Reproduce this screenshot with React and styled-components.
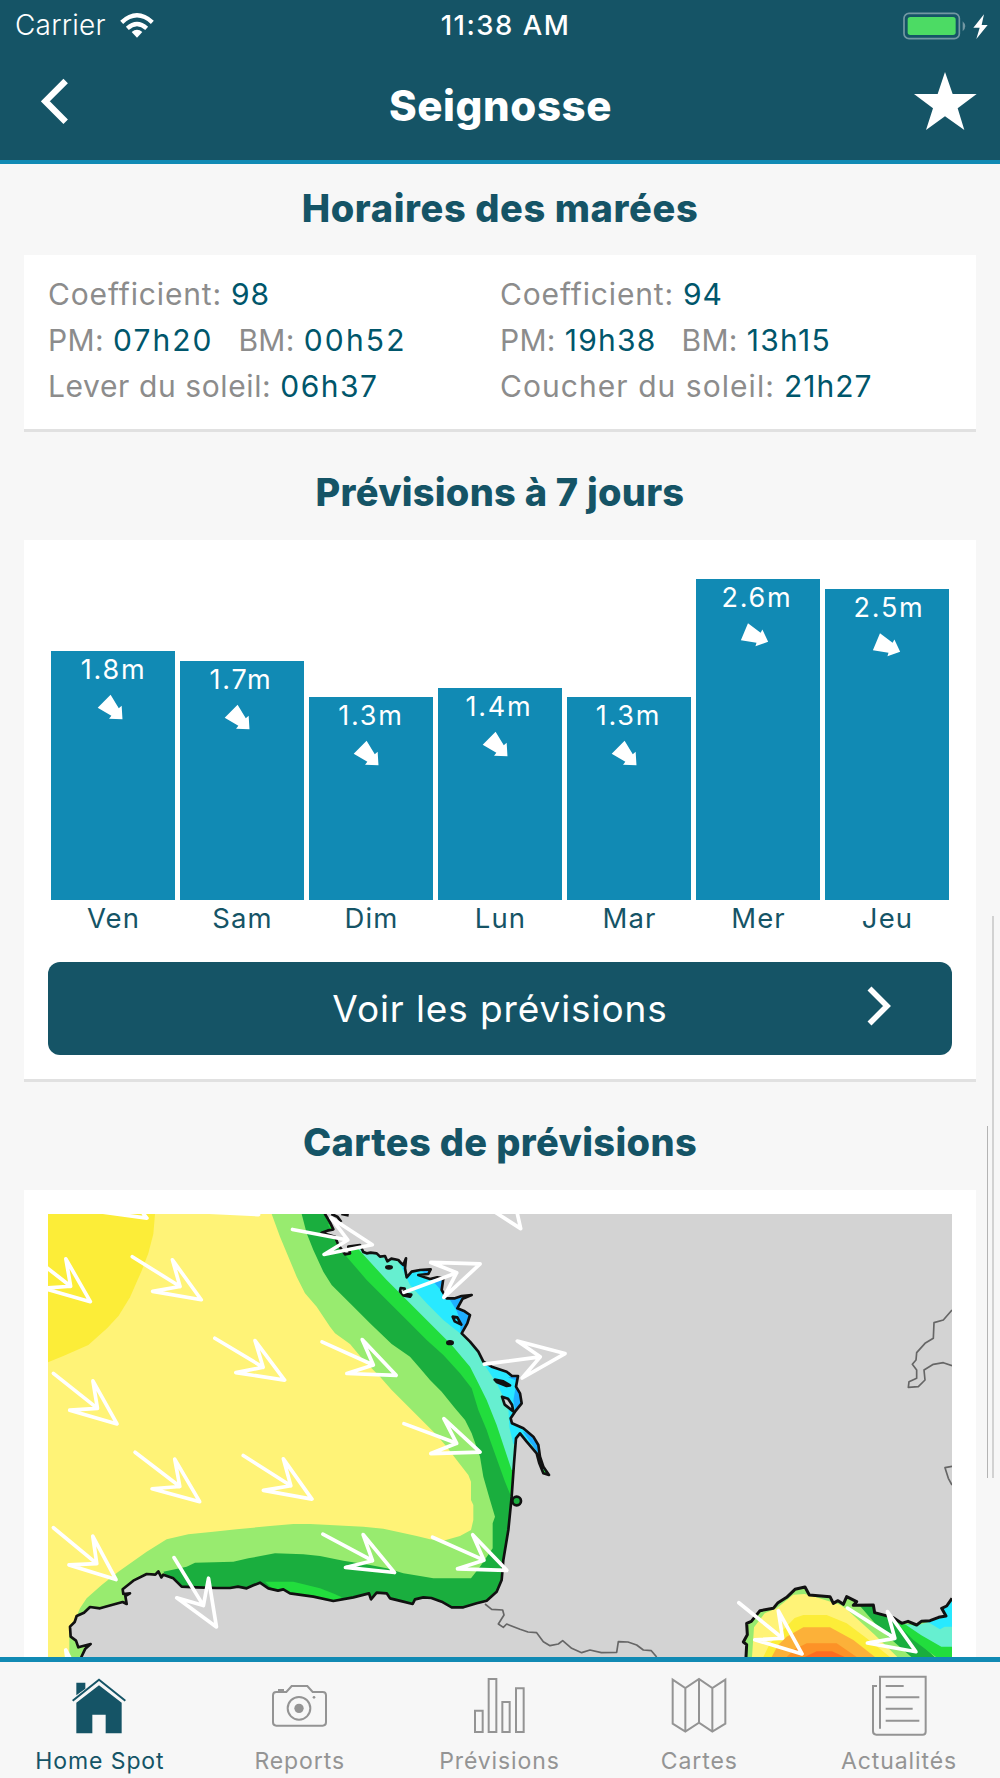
import React from "react"
import styled, {createGlobalStyle} from "styled-components"

const color = {
    dark: "#155466",
    blue: "#118ab4",
    value: "#00566b",
    label: "#8c8c8c",
    muted: "#949494",
    page: "#f7f7f7",
    rule: "#e1e1e1",
}
const sea = {
    yellow: "#fff377",
    gold: "#fced38",
    lime: "#98eb6f",
    green: "#1aae3e",
    bright: "#22dd3d",
    aqua: "#66efd0",
    cyan: "#28e9ff",
    azure: "#1fafff",
    amber: "#fcb139",
    orange: "#fd9227",
    red: "#ff6c20",
    land: "#d3d3d3",
}

const GlobalStyle = createGlobalStyle`
    * {
        box-sizing: border-box;
    }
    body {
        margin: 0px;
        background-color: ${color.page};
        font-family: Inter, "Liberation Sans", sans-serif;
    }
`
const Screen = styled.div`
    position: relative;
    display: flex;
    flex-direction: column;
    width: 1000px;
    height: 1778px;
    overflow: hidden;
    background-color: ${color.page};
`
const Header = styled.header`
    flex: none;
    height: 164px;
    color: white;
    background-color: ${color.dark};
    border-bottom: 4px solid ${color.blue};
`
const StatusBar = styled.div`
    display: grid;
    grid-template-columns: 1fr auto 1fr;
    align-items: center;
    height: 50px;
    padding: 0px 12px 0px 15px;
    font-size: 28px;
    line-height: 51px;
`
const Carrier = styled.div`
    display: flex;
    align-items: center;
    gap: 14px;
    font-weight: 350;
    letter-spacing: 0.2px;
`
const Clock = styled.div`
    padding-left: 8px;
    font-size: 27.5px;
    font-weight: 500;
    letter-spacing: 1.5px;
`
const Power = styled.div`
    display: flex;
    justify-content: flex-end;
    align-items: center;
`
const NavBar = styled.div`
    display: grid;
    grid-template-columns: 80px 1fr 97px;
    align-items: start;
    height: 110px;
    padding: 0px 23px 0px 41px;
`
const NavTitle = styled.h1`
    margin: 0px;
    padding: 22px 0px 0px 0px;
    text-align: center;
    font-size: 42px;
    line-height: 68px;
    font-weight: 800;
    letter-spacing: 0.6px;
`
const NavIcon = styled.button`
    display: flex;
    justify-content: ${props => props.$end ? "flex-end" : "flex-start"};
    margin: 0px;
    padding: ${props => props.$end ? "22px" : "28px"} 0px 0px 0px;
    border-width: 0px;
    background-color: transparent;
`
const Content = styled.main`
    flex: 1;
    min-height: 0px;
    overflow: hidden;
    padding: 0px 24px;
`
const SectionTitle = styled.h2`
    margin: 0px;
    height: ${props => props.$first ? "91px" : "108px"};
    padding-top: ${props => props.$first ? "20px" : "36px"};
    text-align: center;
    font-size: 38px;
    line-height: 48px;
    font-weight: 800;
    color: ${color.dark};
    letter-spacing: ${props => props.$spacing};
`
const Card = styled.section`
    padding: 24px;
    background-color: white;
    border-bottom: 3px solid ${color.rule};
`
const TideCard = styled(Card)`
    display: grid;
    grid-template-columns: 452px 1fr;
    height: 177px;
    padding-top: 16px;
`
const TideColumn = styled.div`
    display: flex;
    flex-direction: column;
`
const TideRow = styled.div`
    display: flex;
    height: 46px;
    line-height: 46px;
    gap: 25px;
`
const TideItem = styled.div`
    display: flex;
    gap: 9px;
    font-size: 30px;
    white-space: nowrap;
`
const TideLabel = styled.span`
    color: ${color.label};
    letter-spacing: ${props => props.$spacing}px;
`
const TideValue = styled.span`
    color: ${color.value};
    letter-spacing: ${props => props.$spacing}px;
`
const ForecastCard = styled(Card)`
    display: flex;
    flex-direction: column;
    height: 542px;
`
const Chart = styled.div`
    display: grid;
    grid-template-columns: repeat(7, 124px);
    justify-content: space-between;
    align-items: end;
    height: 373px;
    padding: 0px 3px;
`
const Day = styled.div`
    display: flex;
    flex-direction: column;
    text-align: center;
`
const Bar = styled.div`
    display: flex;
    flex-direction: column;
    align-items: center;
    padding-top: 1px;
    background-color: ${color.blue};
    color: white;
`
const BarValue = styled.div`
    font-size: 27px;
    line-height: 36px;
    letter-spacing: 1.8px;
`
const BarArrow = styled.svg`
    display: block;
    margin-top: -1px;
`
const DayName = styled.div`
    height: 37px;
    padding-left: 1px;
    font-size: 27.5px;
    line-height: 36px;
    letter-spacing: 1.1px;
    color: ${color.dark};
`
const ForecastButton = styled.button`
    display: grid;
    grid-template-columns: 85px 1fr 85px;
    align-items: center;
    height: 93px;
    margin: 25px 0px 0px 0px;
    padding: 0px;
    border-width: 0px;
    border-radius: 12px;
    background-color: ${color.dark};
    color: white;
    font-family: inherit;
    font-size: 37px;
    letter-spacing: 0.9px;
`
const ButtonLabel = styled.span`
    grid-column: 2;
`
const ButtonIcon = styled.svg`
    display: block;
    margin-bottom: 5px;
`
const MapCard = styled(Card)`
    height: 640px;
`
const MapImage = styled.svg`
    display: block;
    width: 904px;
    height: 443px;
`
const ScrollBar = styled.div`
    position: absolute;
    top: ${props => props.$top};
    right: ${props => props.$right};
    height: ${props => props.$height};
    width: ${props => props.$width};
    background-color: ${props => props.$tone};
`
const TabBar = styled.nav`
    flex: none;
    display: grid;
    grid-template-columns: repeat(5, 1fr);
    height: 121px;
    padding-right: 1px;
    background-color: ${color.page};
    border-top: 5px solid ${color.blue};
`
const Tab = styled.a`
    display: flex;
    flex-direction: column;
    align-items: center;
    padding-top: 10px;
    color: ${props => props.$active ? color.dark : color.muted};
    font-size: 23px;
    line-height: 30px;
    letter-spacing: 0.9px;
`
const TabIcon = styled.svg`
    display: block;
    width: 60px;
    height: 65px;
    margin: 0px 1px 9px 0px;
    fill: none;
    stroke: currentColor;
    stroke-width: 6;
`

const WifiIcon = () => <svg width="34" height="25" viewBox="0 0 102 75" fill="white">
    <path d="M51 74 L35 57 Q51 43 67 57 Z" />
    <g fill="none" stroke="white" strokeWidth="13">
        <path d="M22 46 Q51 20 80 46" />
        <path d="M5 28 Q51 -14 97 28" />
    </g>
</svg>
const BatteryIcon = () => <svg width="87" height="28" viewBox="0 0 261 84">
    <rect x="9" y="4" width="166" height="76" rx="15" fill="none" stroke="#7398a3" strokeWidth="5" />
    <rect x="20" y="15" width="144" height="54" rx="8" fill="#4cdb64" />
    <path d="M185 28 Q201 43 185 58 Z" fill="#7398a3" />
    <path d="M249 7 L217 47 H236 L226 81 L260 39 H242 Z" fill="white" />
</svg>
const BackIcon = () => <svg width="28" height="46" viewBox="0 0 84 138">
    <path d="M74 9 L13 70 L74 131" fill="none" stroke="white" strokeWidth="19" />
</svg>
const StarIcon = () => <svg width="63" height="59" viewBox="0 0 189 177" fill="white">
    <path d="M93 0 L116 66 H188 L131 109 L151 174 L93 133 L36 174 L57 109 L0 66 H71 Z" />
</svg>
const NextIcon = () => <ButtonIcon width="25" height="40" viewBox="0 0 25 40">
    <path d="M2.5 2.5 L20 20 L2.5 37.5" fill="none" stroke="white" strokeWidth="5.6" />
</ButtonIcon>

const HomeIcon = () => <TabIcon viewBox="0 0 180 195">
    <path d="M22 92 L90 40 L158 92 V184 H110 V128 H70 V184 H22 Z M22 32 H49 V50 L22 70 Z" fill="currentColor" stroke="none" />
    <path d="M11 86 L90 23 L169 86" />
</TabIcon>
const CameraIcon = () => <TabIcon viewBox="0 0 180 195">
    <path d="M12 70 Q12 60 22 60 H52 L68 42 H115 L131 60 H161 Q171 60 171 70 V151 Q171 161 161 161 H22 Q12 161 12 151 Z" />
    <path d="M30 58 V54 H42 V58 Z" fill="currentColor" />
    <circle cx="90" cy="109" r="34" />
    <circle cx="90" cy="109" r="14" fill="currentColor" stroke="none" />
    <circle cx="135" cy="76" r="4" fill="currentColor" stroke="none" />
</TabIcon>
const ChartIcon = () => <TabIcon viewBox="0 0 180 195">
    <path d="M18 116 H41 V180 H18 Z M59 21 H82 V180 H59 Z M100 90 H122 V180 H100 Z M141 49 H164 V180 H141 Z" />
</TabIcon>
const MapIcon = () => <TabIcon viewBox="0 0 180 195">
    <path d="M11 23 L49 48 L90 21 L130 48 L169 23 V155 L130 179 L90 152 L49 179 L11 155 Z M49 48 V179 M90 21 V152 M130 48 V179" />
</TabIcon>
const NewsIcon = () => <TabIcon viewBox="0 0 180 195">
    <path d="M33 170 V14 H170 V179 Q170 188 161 188 H22 Q12 188 12 178 V42 H24" />
    <path d="M50 42 H104 M50 76 H151 M50 110 H131 M50 146 H151" />
</TabIcon>

const SwellArrow = ({x, y, angle}) => <path
    d="M-249 0 H-80 L-142 -56 L-5 0 L-142 56 L-80 0"
    transform={`translate(${x} ${y}) rotate(${angle})`}
/>

const atlanticCoast = "831,0 846,25 856,46 838,50 821,56 861,68 871,93 891,121 906,118 901,98 936,93 946,114 956,118 968,116 986,118 996,128 1011,126 1018,142 1030,134 1051,138 1060,148 1066,153 1074,133 1071,163 1076,190 1091,173 1116,168 1148,166 1141,180 1111,183 1130,190 1146,195 1168,190 1186,193 1181,228 1196,253 1221,253 1241,246 1271,243 1244,254 1228,283 1250,292 1266,303 1258,328 1241,358 1266,383 1291,413 1306,443 1331,458 1376,473 1392,486 1410,486 1404,518 1416,538 1421,568 1401,593 1388,613 1392,628 1426,643 1456,668 1471,693 1476,728 1486,758 1503,783 1486,778 1474,748 1466,718 1436,683 1416,658 1404,673 1398,748 1391,848 1381,948 1366,1038 1361,1098 1346,1133 1316,1160 1286,1168 1246,1180 1211,1180 1181,1163 1150,1152 1126,1150 1101,1156 1094,1170 1066,1163 1026,1153 1016,1138 986,1136 969,1156 963,1138 916,1150 856,1161 796,1148 726,1138 706,1126 690,1130 661,1123 636,1106 616,1114 596,1123 570,1118 546,1122 506,1122 446,1120 401,1118 376,1093 346,1082 340,1090 331,1072 322,1082 296,1080 256,1100 224,1126 226,1140 246,1138 232,1146 236,1170 224,1164 191,1173 156,1183 126,1179 108,1196 86,1206 80,1224 66,1238 68,1268 84,1280 91,1300 128,1290 112,1304 100,1329"
const medCoast = "2094,1329 2096,1292 2086,1284 2098,1262 2096,1228 2110,1222 2136,1190 2176,1183 2190,1166 2216,1150 2241,1126 2271,1119 2284,1143 2346,1148 2356,1168 2370,1160 2386,1171 2396,1148 2426,1163 2416,1174 2476,1173 2480,1196 2536,1211 2561,1228 2580,1222 2606,1233 2620,1222 2646,1220 2672,1210 2694,1206 2681,1183 2696,1176 2712,1153"

const swell = [
    [301, 15, 30], [636, 4, 25], [131, 266, 38], [464, 260, 32], [714, 501, 31],
    [211, 633, 38.5], [459, 866, 37.4], [796, 858, 32.4], [208, 1100, 39.6],
    [508, 1243, 58.5], [126, 1442, 40], [978, 93, 10.8], [1301, 148, -20.5],
    [1556, 418, -7.5], [1049, 486, 24.3], [1421, 48, 55], [1301, 716, 20.5],
    [1044, 1078, 28.2], [1381, 1071, 24], [2266, 1323, 39], [2608, 1316, 32.5],
]

const SwellMap = () => <MapImage viewBox="0 0 2712 1329" preserveAspectRatio="none">
    <rect width="2712" height="1329" fill={sea.yellow} />
    <path fill={sea.gold} d="M0 0 H321 L316 60 L301 118 L281 170 L246 250 L212 305 L178 342 L121 393 L46 426 L0 445 Z" />
    <path fill={sea.lime} d="M671 0 L696 68 L721 128 L746 188 L771 238 L806 278 L846 338 L861 358 L906 390 L946 438 L996 488 L1031 528 L1076 573 L1121 618 L1166 663 L1196 698 L1226 738 L1261 783 L1269 803 V858 L1276 873 V918 L1269 948 L1236 966 L1186 980 L1146 976 L1106 966 L1051 954 L1006 944 L946 938 L786 930 H736 L666 936 L566 946 L496 953 L421 961 L356 976 L296 1013 L211 1073 L161 1113 L116 1153 L96 1183 L81 1218 L64 1258 V1329 H1500 V0 Z" />
    <path fill={sea.green} d="M761 0 L776 58 L796 108 L826 173 L851 213 L906 268 L966 328 L1031 390 L1086 428 L1116 463 L1146 498 L1181 533 L1221 583 L1251 618 L1271 658 L1296 728 L1306 788 L1326 858 L1341 908 L1334 928 V1003 L1296 1058 L1269 1093 H1156 L1116 1086 L1066 1078 L1016 1063 L966 1053 L886 1040 L816 1026 L766 1021 L681 1018 L601 1033 L556 1043 L441 1046 L416 1058 L346 1073 L420 1200 H1500 V0 Z" />
    <path fill={sea.bright} d="M840 30 L866 93 L896 128 L956 198 L1016 258 L1086 328 L1136 378 L1186 423 L1236 478 L1271 523 L1291 588 L1316 648 L1326 678 L1351 748 L1371 803 L1390 850 L1500 850 V0 Z" />
    <path fill={sea.bright} d="M651 1103 H736 L816 1123 L860 1140 L881 1150 L860 1180 L700 1150 Z" />
    <path fill={sea.aqua} d="M926 100 L956 133 L1016 198 L1076 258 L1136 318 L1211 393 L1266 458 L1291 508 L1316 558 L1346 633 L1371 708 L1391 768 L1500 768 V0 Z" />
    <path fill={sea.cyan} d="M1056 150 L1086 213 L1136 268 L1186 318 L1236 358 H1300 V150 Z M1306 448 L1346 508 L1381 578 L1384 640 L1396 690 H1550 V448 Z" />
    <path fill={sea.azure} d="M1110 160 L1156 203 L1206 258 L1226 290 L1236 318 L1238 352 H1300 V150 Z M1380 490 L1406 500 L1396 560 L1404 600 L1440 570 V480 Z M1424 652 L1520 790 L1540 700 Z" />
    <polygon
        points={atlanticCoast + " 100,1360 2760,1360 2760,-40 831,-40"}
        fill={sea.land} stroke="#111" strokeWidth="8" strokeLinejoin="round"
    />
    <g fill="#111" stroke="#111" strokeWidth="8" strokeLinejoin="round">
        <path d="M850 0 L868 8 L880 24 M880 0 L902 4" fill="none" />
        <ellipse cx="1023" cy="160" rx="8" ry="3" />
        <ellipse cx="1206" cy="386" rx="8" ry="4" />
        <path d="M1058 222 L1070 224 L1068 240 L1090 242 L1086 248 L1066 244 L1056 232 Z" fill={sea.land} />
        <path d="M1214 308 L1228 310 L1240 332 L1220 322 Z" fill={sea.cyan} />
        <path d="M1340 497 L1366 502 L1386 514 L1376 516 L1346 504 Z" />
        <path d="M1362 548 L1380 554 L1392 572 L1396 592 L1370 572 Z" fill={sea.land} />
        <circle cx="1406" cy="861" r="13" fill={sea.green} />
    </g>
    <g fill="none" stroke="#666" strokeWidth="5" strokeLinejoin="round">
        <path d="M1311 1170 L1331 1186 L1364 1188 L1368 1203 L1351 1230 L1366 1240 L1376 1230 L1416 1246 L1440 1254 L1466 1256 L1486 1283 L1506 1295 L1531 1290 L1544 1280 L1571 1303 L1601 1316 L1626 1308 L1660 1316 L1706 1315 L1711 1283 L1740 1284 L1766 1293 L1786 1308 L1810 1310 L1826 1329" />
        <path d="M2712 288 L2686 318 L2658 326 L2656 373 L2631 388 L2606 416 L2604 438 L2593 451 L2606 468 V493 L2583 503 L2581 520 L2611 518 L2631 498 L2628 468 L2656 451 L2686 446 L2712 455" />
        <path d="M2712 757 L2691 761 L2701 793 L2712 813" />
    </g>
    <polygon points={medCoast + " 2712,1329"} fill={sea.lime} />
    <path fill={sea.yellow} d="M2112 1329 L2118 1240 L2150 1198 L2186 1183 L2236 1142 L2270 1140 L2300 1148 L2376 1172 L2396 1186 L2480 1262 L2548 1329 Z" />
    <path fill={sea.gold} d="M2146 1329 L2166 1288 L2196 1258 L2240 1212 L2266 1203 H2336 L2396 1228 L2456 1273 L2526 1329 Z" />
    <path fill={sea.amber} d="M2171 1329 L2190 1294 L2216 1268 L2266 1240 H2346 L2416 1278 L2481 1329 Z" />
    <path fill={sea.orange} d="M2216 1329 L2240 1306 L2276 1288 H2366 L2426 1329 Z" />
    <path fill={sea.red} d="M2270 1329 L2306 1312 H2352 L2390 1329 Z" />
    <path fill={sea.green} d="M2436 1176 H2476 L2480 1196 L2536 1211 L2660 1329 H2590 L2500 1250 Z" />
    <path fill={sea.bright} d="M2532 1214 L2561 1230 L2712 1240 V1329 H2664 L2596 1278 Z" />
    <path fill={sea.aqua} d="M2570 1230 L2606 1235 L2712 1200 V1298 H2680 L2620 1264 Z" />
    <path fill={sea.cyan} d="M2640 1224 L2694 1208 L2683 1184 L2712 1156 V1238 H2690 L2676 1246 Z" />
    <polyline points={medCoast} fill="none" stroke="#111" strokeWidth="9" strokeLinejoin="round" />
    <g fill="none" stroke="white" strokeWidth="11" strokeLinecap="round" strokeLinejoin="round">
        {swell.map(([x, y, angle], index) =>
            <SwellArrow key={index} x={x} y={y} angle={angle} />
        )}
    </g>
</MapImage>

// textShift and arrowShift are px from the middle of the bar
const days = [
    {name: "Ven", size: "1.8m", height: 249, angle: 44.5, textShift: 0.5, arrowShift: -3},
    {name: "Sam", size: "1.7m", height: 239, angle: 44.5, textShift: -1, arrowShift: -5},
    {name: "Dim", size: "1.3m", height: 203, angle: 44.5, textShift: 0, arrowShift: -5},
    {name: "Lun", size: "1.4m", height: 212.5, angle: 44.5, textShift: -1, arrowShift: -5},
    {name: "Mar", size: "1.3m", height: 203, angle: 44.5, textShift: -0.5, arrowShift: -5},
    {name: "Mer", size: "2.6m", height: 321, angle: 22.7, textShift: -1, arrowShift: -6},
    {name: "Jeu", size: "2.5m", height: 311.5, angle: 22.7, textShift: 2, arrowShift: -3},
]
// [label, value, label spacing, value spacing]
const tides = [
    [
        [["Coefficient:", "98", 0.85, 1]],
        [["PM:", "07h20", 0.4, 2], ["BM:", "00h52", 0.3, 2.2]],
        [["Lever du soleil:", "06h37", 0.6, 1.5]],
    ],
    [
        [["Coefficient:", "94", 0.85, 1]],
        [["PM:", "19h38", 0.3, 1.2], ["BM:", "13h15", 0.3, 1.3]],
        [["Coucher du soleil:", "21h27", 1.05, 1]],
    ],
]
const tabs = [
    ["Home Spot", HomeIcon],
    ["Reports", CameraIcon],
    ["Prévisions", ChartIcon],
    ["Cartes", MapIcon],
    ["Actualités", NewsIcon],
]

const DayBar = ({name, size, height, angle, textShift, arrowShift}) => <Day>
    <Bar style={{height}}>
        <BarValue style={{transform: `translateX(${textShift}px)`}}>{size}</BarValue>
        <BarArrow width="50" height="40" viewBox="-25 -20 50 40" fill="white">
            <path
                d="M-8.2 -9.2 L7.1 -5.3 L7.5 -9 L17.5 0 L7.5 9 L7.1 5.3 L-8.2 9.2 Z"
                transform={`translate(${arrowShift} 0) rotate(${angle})`}
            />
        </BarArrow>
    </Bar>
    <DayName>{name}</DayName>
</Day>

const App = () => <Screen>
    <GlobalStyle />
    <Header>
        <StatusBar>
            <Carrier>Carrier <WifiIcon /></Carrier>
            <Clock>11:38 AM</Clock>
            <Power><BatteryIcon /></Power>
        </StatusBar>
        <NavBar>
            <NavIcon><BackIcon /></NavIcon>
            <NavTitle>Seignosse</NavTitle>
            <NavIcon $end><StarIcon /></NavIcon>
        </NavBar>
    </Header>
    <Content>
        <SectionTitle $first $spacing="0.6px">Horaires des marées</SectionTitle>
        <TideCard>
            {tides.map((rows, column) =>
                <TideColumn key={column}>
                    {rows.map((items, row) =>
                        <TideRow key={row}>
                            {items.map(([label, value, labelSpacing, valueSpacing]) =>
                                <TideItem key={label}>
                                    <TideLabel $spacing={labelSpacing}>{label}</TideLabel>
                                    <TideValue $spacing={valueSpacing}>{value}</TideValue>
                                </TideItem>
                            )}
                        </TideRow>
                    )}
                </TideColumn>
            )}
        </TideCard>
        <SectionTitle $spacing="0.25px">Prévisions à 7 jours</SectionTitle>
        <ForecastCard>
            <Chart>
                {days.map(day => <DayBar key={day.name} {...day} />)}
            </Chart>
            <ForecastButton>
                <ButtonLabel>Voir les prévisions</ButtonLabel>
                <NextIcon />
            </ForecastButton>
        </ForecastCard>
        <SectionTitle $spacing="0.35px">Cartes de prévisions</SectionTitle>
        <MapCard>
            <SwellMap />
        </MapCard>
    </Content>
    <TabBar>
        {tabs.map(([label, Icon], index) =>
            <Tab key={label} $active={index === 0}>
                <Icon />
                {label}
            </Tab>
        )}
    </TabBar>
    <ScrollBar $top="916px" $right="6px" $height="562px" $width="2px" $tone="#d2d2d2" />
    <ScrollBar $top="1126px" $right="12px" $height="352px" $width="1px" $tone="#b4b4b4" />
</Screen>

export default App
